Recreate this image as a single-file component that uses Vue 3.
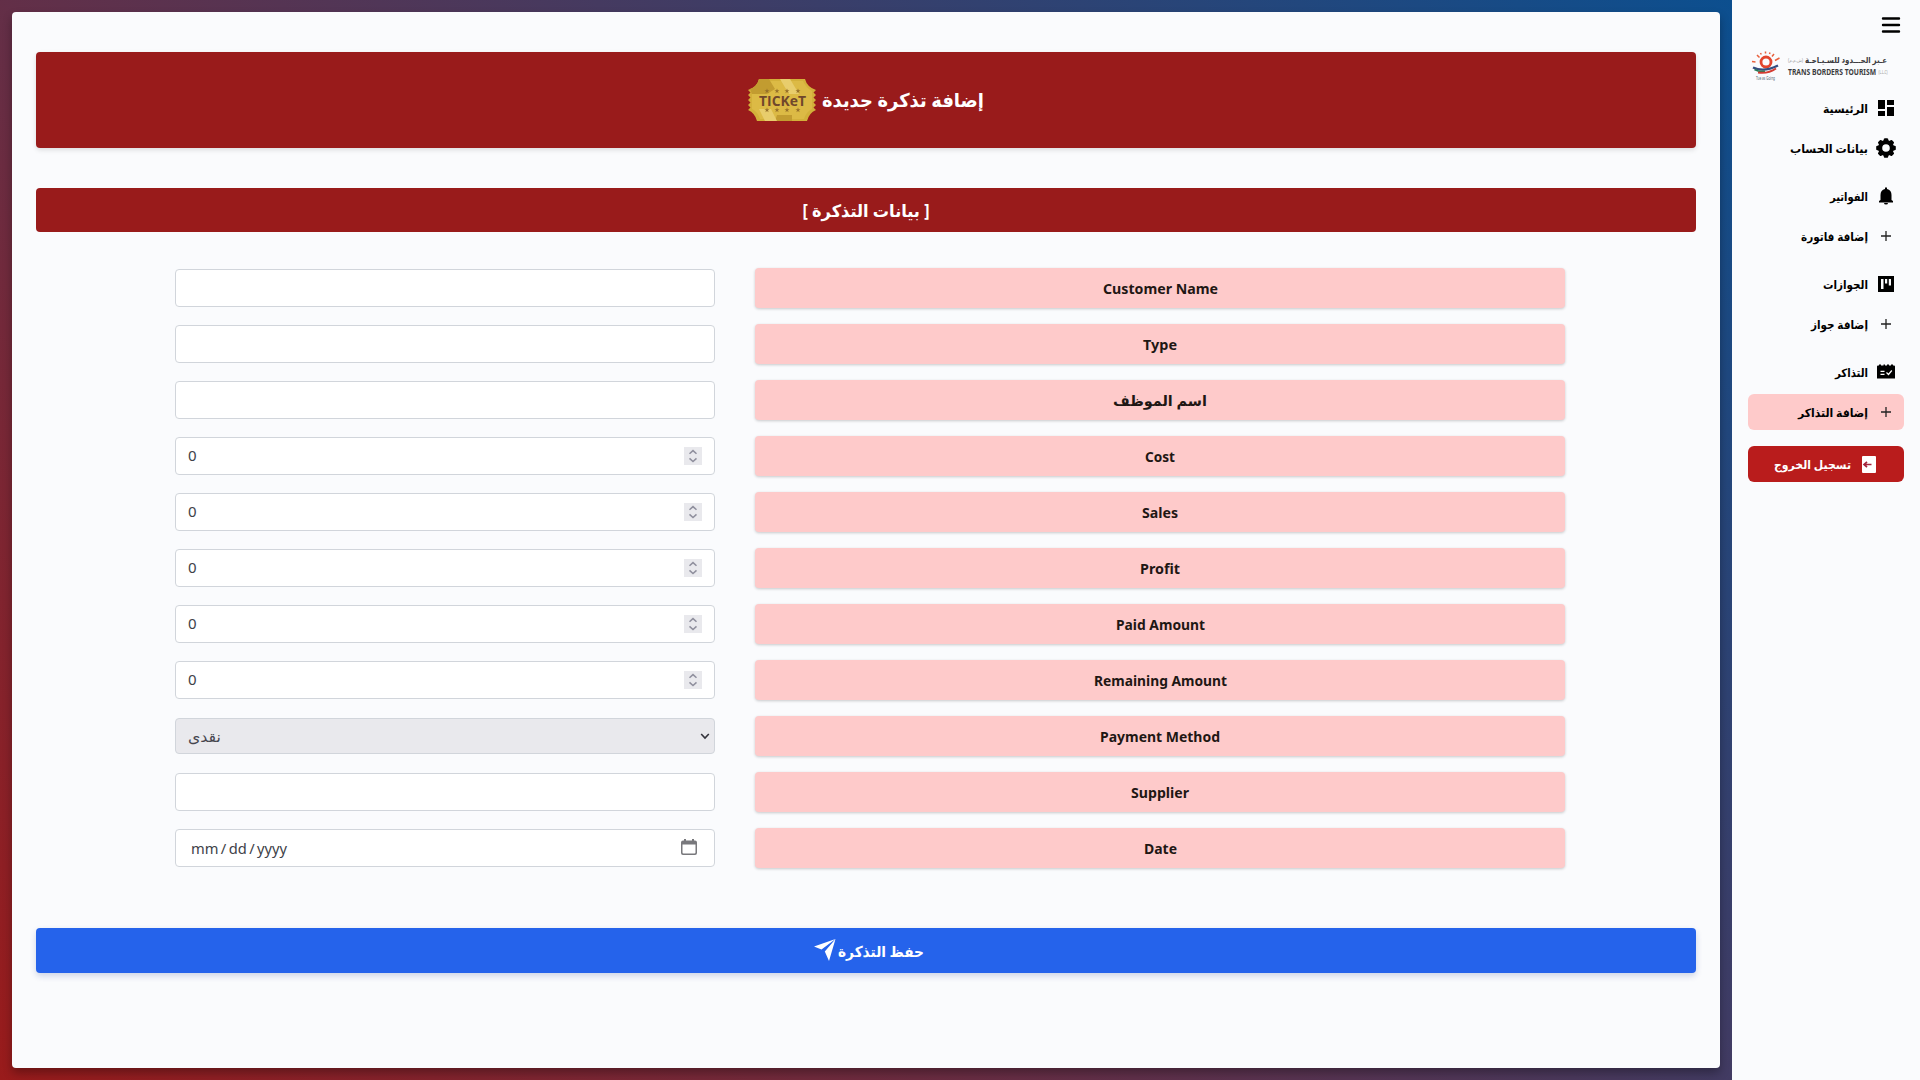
<script setup>
const rows = [
  { label: 'Customer Name', kind: 'text', w: 115 },
  { label: 'Type', kind: 'text', w: 34 },
  { label: 'اسم الموظف', kind: 'text', w: 94, ar: true },
  { label: 'Cost', kind: 'number', w: 30 },
  { label: 'Sales', kind: 'number', w: 36 },
  { label: 'Profit', kind: 'number', w: 40 },
  { label: 'Paid Amount', kind: 'number', w: 89 },
  { label: 'Remaining Amount', kind: 'number', w: 133 },
  { label: 'Payment Method', kind: 'select', w: 120 },
  { label: 'Supplier', kind: 'text', w: 58 },
  { label: 'Date', kind: 'date', w: 33 },
]

const groups = [
  [
    { label: 'الرئيسية', icon: 'dashboard', w: 45 },
    { label: 'بيانات الحساب', icon: 'settings', w: 78 },
  ],
  [
    { label: 'الفواتير', icon: 'bell', w: 38 },
    { label: 'إضافة فاتورة', icon: 'plus', w: 67 },
  ],
  [
    { label: 'الجوازات', icon: 'board', w: 45 },
    { label: 'إضافة جواز', icon: 'plus', w: 57 },
  ],
  [
    { label: 'التذاكر', icon: 'events', w: 33 },
    { label: 'إضافة التذاكر', icon: 'plus', w: 70, active: true },
  ],
]

const star = '0,-3 .8,-1 3,-.9 1.2,.4 1.8,2.5 0,1.3 -1.8,2.5 -1.2,.4 -3,-.9 -.8,-1'
</script>

<template>
  <div class="app">
    <main class="stage">
      <section class="panel">
        <header class="banner">
          <svg class="ticket" width="70" height="42" viewBox="0 0 70 42">
            <path d="M12 0H58Q60 8 69 11L66.500 13.500L69 16L66.500 18.500L69 21L66.500 23.500L69 26L66.500 28.500L69 31Q62 34 60 42H10Q8 34 1 31L3.500 28.500L1 26L3.500 23.500L1 21L3.500 18.500L1 16L3.500 13.500L1 11Q10 8 12 0Z" fill="#d3b03a" />
            <path d="M14 2H56Q59 9 65 12V30Q59 33 57 40H13Q11 33 5 30V12Q11 9 14 2Z" fill="#dcba45" />
            <path d="M12 0H22L28 10L20 15H5L3 10Q10 8 12 0ZM30 36H45V42H28Z" fill="#c29c30" />
            <path d="M33 0H43L52 15H42ZM12 30H24L30 42H18Z" fill="#e8cd6c" />
            <g fill="#96702a">
              <polygon v-for="x in [20, 30, 40, 51]" :key="'a' + x" :points="star" :transform="`translate(${x} 12) scale(.85)`" />
              <polygon v-for="x in [20, 30, 40, 51]" :key="'b' + x" :points="star" :transform="`translate(${x} 31) scale(.85)`" />
            </g>
            <text x="12" y="26.500" textLength="47" lengthAdjust="spacingAndGlyphs" class="ticket-text">TICKeT</text>
          </svg>
          <svg class="t" width="162" height="36"><text x="81" y="25" text-anchor="middle" textLength="162" lengthAdjust="spacingAndGlyphs" font-size="19" direction="rtl">إضافة تذكرة جديدة</text></svg>
        </header>

        <h2 class="section">
          <svg class="t" width="130" height="30"><text x="65" y="21.500" text-anchor="middle" textLength="127" lengthAdjust="spacingAndGlyphs" font-size="17" direction="rtl">[ بيانات التذكرة ]</text></svg>
        </h2>

        <div class="form">
          <div v-for="row in rows" :key="row.label" class="row">
            <div class="field" :class="row.kind">
              <span v-if="row.kind === 'number'" class="value">0</span>
              <svg v-if="row.kind === 'number'" class="spinner" width="18" height="18" viewBox="0 0 18 18">
                <rect width="18" height="18" fill="#e9e9ed" />
                <path d="M5.500 6.800L9 3.600L12.500 6.800M5.500 11.400L9 14.600L12.500 11.400" fill="none" stroke="#8f8f9d" stroke-width="1.500" />
              </svg>
              <svg v-if="row.kind === 'select'" width="33" height="30"><text x="33" y="20.500" text-anchor="start" textLength="33" lengthAdjust="spacingAndGlyphs" font-size="15" fill="#46464f" direction="rtl">نقدى</text></svg>
              <svg v-if="row.kind === 'select'" class="chev" width="10" height="8" viewBox="0 0 10 8"><path d="M1.200 2L5 6L8.800 2" fill="none" stroke="#33333b" stroke-width="1.600" /></svg>
              <span v-if="row.kind === 'date'" class="mdy"><i>mm</i><i>/</i><i>dd</i><i>/</i><i>yyyy</i></span>
              <svg v-if="row.kind === 'date'" class="cal" width="16" height="16" viewBox="0 0 16 16">
                <path fill="#78787c" fill-rule="evenodd" d="M3 0H5V1.500H11V0H13V1.500H14A2 2 0 0 1 16 3.500V14A2 2 0 0 1 14 16H2A2 2 0 0 1 0 14V3.500A2 2 0 0 1 2 1.500H3ZM1.500 5.500V13.500Q1.500 14.500 2.500 14.500H13.500Q14.500 14.500 14.500 13.500V5.500Z" />
              </svg>
            </div>
            <div class="label">
              <svg class="t" :width="row.w + 4" height="30"><text :x="row.w / 2 + 2" y="20.500" text-anchor="middle" :textLength="row.w" lengthAdjust="spacingAndGlyphs" :font-size="row.ar ? 15 : 14.500" :direction="row.ar ? 'rtl' : 'ltr'">{{ row.label }}</text></svg>
            </div>
          </div>
        </div>

        <button class="save">
          <svg width="22" height="23" viewBox="0 0 22 23" fill="#fff"><path d="M0 7.500L21.500 0L7.500 10.500ZM21.500 0L15 22L10.800 12.500Z" /></svg>
          <svg class="t" width="87" height="30"><text x="44" y="20.500" text-anchor="middle" textLength="86" lengthAdjust="spacingAndGlyphs" font-size="15" direction="rtl">حفظ التذكرة</text></svg>
        </button>
      </section>
    </main>

    <aside class="side">
      <svg class="menu" width="18" height="16" viewBox="0 0 18 16"><path d="M1 1.500H17M1 8H17M1 14.500H17" stroke="#000" stroke-width="2.400" stroke-linecap="round" /></svg>

      <svg class="logo" width="144" height="34" viewBox="0 0 144 34">
        <g fill="none">
          <circle cx="15" cy="12" r="5" stroke="#e2452e" stroke-width="2.800" />
          <path d="M1 11.500L4.500 12M6 5L8.500 7.500M14.500 1.500V3.500M23 4L21 6.500M28.500 8L24 10.500M9.500 3L10.300 4.500M19 2.500L18.500 4" stroke="#e8603c" stroke-width="1.500" />
          <path d="M2 17.500Q13 22.500 27 15.500" stroke="#344d80" stroke-width="2.400" />
          <path d="M3.500 19.500Q9 22.500 14 21" stroke="#267b57" stroke-width="1.800" />
          <path d="M7 22.500Q17 24 25 18.500" stroke="#d43c32" stroke-width="2" />
        </g>
        <text x="5" y="29.500" textLength="19" lengthAdjust="spacingAndGlyphs" font-size="4.500" fill="#567">Tue as Going</text>
        <text x="136" y="13" text-anchor="start" textLength="82" lengthAdjust="spacingAndGlyphs" font-size="8.500" font-weight="700" fill="#3c3c40" direction="rtl">عـبر الحـــدود للسـيـاحـة</text>
        <text x="52" y="12" text-anchor="start" textLength="15" lengthAdjust="spacingAndGlyphs" font-size="4.500" fill="#999" direction="rtl">(ش.م.م)</text>
        <text x="37" y="24.500" textLength="88" lengthAdjust="spacingAndGlyphs" font-size="8" font-weight="700" fill="#3c3c40">TRANS BORDERS TOURISM</text>
        <text x="127.500" y="24" textLength="9" lengthAdjust="spacingAndGlyphs" font-size="4.500" fill="#999">(L.L.C)</text>
      </svg>

      <nav>
        <div v-for="(group, g) in groups" :key="g" class="group">
          <a v-for="item in group" :key="item.label" class="item" :class="{ active: item.active }">
            <svg class="t" :width="item.w" height="24"><text :x="item.w" y="16.500" text-anchor="start" :textLength="item.w" lengthAdjust="spacingAndGlyphs" font-size="11.500" direction="rtl">{{ item.label }}</text></svg>
            <svg class="icon" width="20" height="20" viewBox="0 0 20 20">
              <path v-if="item.icon === 'dashboard'" d="M2 2H9V11H2ZM11 2H18V7H11ZM11 9H18V18H11ZM2 13H9V18H2Z" />
              <g v-else-if="item.icon === 'settings'">
                <circle cx="10" cy="10" r="5.800" fill="none" stroke="#000" stroke-width="4" />
                <path v-for="a in 8" :key="a" d="M7 3.500L8 .7Q8.200 .2 8.800 .2H11.200Q11.800 .2 12 .7L13 3.500Z" :transform="`rotate(${a * 45} 10 10)`" />
              </g>
              <path v-else-if="item.icon === 'bell'" d="M9 1.500H11V3Q15.500 4 15.500 9V14L17 15V16.500H3V15L4.500 14V9Q4.500 4 9 3ZM8 17H12Q12 18.500 10 18.500Q8 18.500 8 17Z" />
              <path v-else-if="item.icon === 'board'" fill-rule="evenodd" d="M2 2H18V18H2ZM5 5V15H7.500V5ZM9 5V9.500H11.200V5ZM12.800 5V11.500H15V5Z" />
              <path v-else-if="item.icon === 'plus'" d="M5 10H15M10 5V15" fill="none" stroke="#222" stroke-width="1.300" />
              <g v-else>
                <path d="M1 4.500Q1 3.500 2 3.500H3V2.500H5V3.500H7.500V2.500H9V3.500H11V2.500H13V3.500H15V2.500H17V3.500H18Q19 3.500 19 4.500V16.500H1Z" />
                <path d="M4.500 9.300H8.500M4.500 12.300H8.500M10.500 10.500L12.500 12.500L15.800 8.500" fill="none" stroke="#fff" stroke-width="1.200" />
              </g>
            </svg>
          </a>
        </div>
        <button class="logout">
          <svg class="t" width="78" height="24"><text x="78" y="16.500" text-anchor="start" textLength="77" lengthAdjust="spacingAndGlyphs" font-size="11.500" direction="rtl">تسجيل الخروج</text></svg>
          <svg width="14" height="17" viewBox="0 0 14 17"><rect width="14" height="17" rx="1" fill="#fff" /><path d="M9.500 8.500H3M5 5.800L2 8.500L5 11.200" fill="none" stroke="#a4243c" stroke-width="1.700" /></svg>
        </button>
      </nav>
    </aside>
  </div>
</template>

<style>
body {
  margin: 0;
}
</style>

<style scoped>
* {
  box-sizing: border-box;
}
svg {
  display: block;
  overflow: visible;
  flex: none;
}
.app {
  display: flex;
  width: 1920px;
  height: 1080px;
  overflow: hidden;
  font-family: 'Noto Sans', 'DejaVu Sans', sans-serif;
}
.stage {
  width: 1732px;
  padding: 12px;
  background: linear-gradient(45deg, #991b1b, #0c4f8f);
}
.panel {
  height: 1056px;
  padding: 40px 24px;
  border-radius: 4px;
  background: #fafbfd;
  box-shadow: 0 5px 10px rgba(0, 0, 0, 0.3);
}
.t text {
  font-weight: 700;
  fill: currentColor;
}
.banner,
.section {
  display: flex;
  align-items: center;
  justify-content: center;
  margin: 0;
  border-radius: 4px;
  background: #991b1b;
  color: #fff;
}
.banner {
  height: 96px;
  gap: 5px;
  padding-right: 2px;
  box-shadow: 0 2px 5px rgba(0, 0, 0, 0.12);
}
.ticket-text {
  font: 700 14px 'Open Sans', sans-serif;
  fill: #70472b;
}
.section {
  height: 44px;
  margin-top: 40px;
}
.form {
  display: flex;
  flex-direction: column;
  gap: 16px;
  margin: 36px 131px 0 139px;
}
.row {
  display: flex;
  align-items: center;
  justify-content: space-between;
  height: 40px;
}
.field {
  display: flex;
  align-items: center;
  justify-content: space-between;
  width: 540px;
  height: 38px;
  padding: 0 12px;
  border: 1px solid #d1d5db;
  border-radius: 4px;
  background: #fff;
  color: #404248;
  font-size: 15px;
}
.value {
  padding-bottom: 2px;
}
.field.select {
  height: 36px;
  padding-right: 4px;
  background: #e9e9ed;
}
.field.date {
  padding: 0 17px 0 15px;
}
.mdy {
  display: flex;
  gap: 2.4px;
  padding-bottom: 1px;
  font-size: 14.7px;
}
.cal {
  margin-bottom: 2px;
}
.mdy i {
  font-style: normal;
}
.label {
  display: flex;
  align-items: center;
  justify-content: center;
  width: 810px;
  height: 40px;
  border-radius: 4px;
  background: #fecaca;
  color: #1f1714;
  box-shadow: 0 1px 3px rgba(0, 0, 0, 0.2);
}
.save {
  display: flex;
  align-items: center;
  justify-content: center;
  gap: 1px;
  width: 100%;
  height: 45px;
  margin-top: 60px;
  padding: 0 0 0 6px;
  border: 0;
  border-radius: 4px;
  background: #2563eb;
  color: #fff;
  font: inherit;
  box-shadow: 0 3px 6px rgba(30, 60, 140, 0.2);
}
.side {
  width: 188px;
  padding: 17px 16px 0;
  background: #fafbfd;
  color: #000;
}
.menu {
  margin: 0 4px 0 auto;
}
.logo {
  margin: 17px 0 0 3px;
}
nav {
  margin-top: 6px;
}
.group {
  display: flex;
  flex-direction: column;
  gap: 4px;
  margin-bottom: 12px;
}
.item {
  display: flex;
  align-items: center;
  justify-content: flex-end;
  gap: 8px;
  height: 36px;
  padding-right: 8px;
  border-radius: 6px;
}
.item.active {
  background: #fecaca;
}
.logout {
  display: flex;
  align-items: center;
  justify-content: flex-end;
  gap: 11px;
  width: 100%;
  height: 36px;
  margin-top: 16px;
  padding: 0 28px 0 0;
  border: 0;
  border-radius: 6px;
  background: #b91c1c;
  color: #fff;
  font: inherit;
}
</style>
